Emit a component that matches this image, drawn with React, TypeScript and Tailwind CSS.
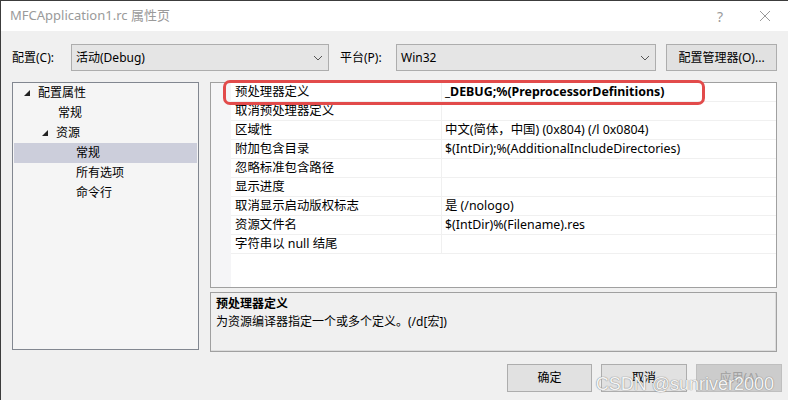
import React from "react";

const font = { fontFamily: '"Noto Sans", "Noto Sans CJK SC", sans-serif' };

const treeItems = [
  { label: "配置属性", indent: 10, arrow: true, selected: false },
  { label: "常规", indent: 44, arrow: false, selected: false },
  { label: "资源", indent: 28, arrow: true, selected: false },
  { label: "常规", indent: 62, arrow: false, selected: true },
  { label: "所有选项", indent: 62, arrow: false, selected: false },
  { label: "命令行", indent: 62, arrow: false, selected: false },
];

const rows: [string, string][] = [
  ["预处理器定义", "_DEBUG;%(PreprocessorDefinitions)"],
  ["取消预处理器定义", ""],
  ["区域性", "中文(简体，中国) (0x804) (/l 0x0804)"],
  ["附加包含目录", "$(IntDir);%(AdditionalIncludeDirectories)"],
  ["忽略标准包含路径", ""],
  ["显示进度", ""],
  ["取消显示启动版权标志", "是 (/nologo)"],
  ["资源文件名", "$(IntDir)%(Filename).res"],
  ["字符串以 null 结尾", ""],
];

function Chevron() {
  return (
    <svg width="10" height="6" viewBox="0 0 10 6" className="shrink-0">
      <path d="M1 1 L5 5 L9 1" fill="none" stroke="#555" strokeWidth="1" />
    </svg>
  );
}

export default function App() {
  return (
    <div
      className="w-[788px] h-[400px] bg-[#f0f0f0] border-l border-t border-[#3c3c3c] flex flex-col text-[12px] text-black overflow-hidden"
      style={font}
    >
      {/* title bar */}
      <div className="h-[30px] bg-white flex items-center shrink-0">
        <div className="pl-[9px] text-[13px] text-[#9a9a9a] flex-1">MFCApplication1.rc 属性页</div>
        <div className="w-[44px] text-center text-[14px] text-[#9a9a9a]">?</div>
        <div className="w-[46px] flex justify-center">
          <svg width="12" height="12" viewBox="0 0 12 12">
            <path d="M1 1 L11 11 M11 1 L1 11" stroke="#9a9a9a" strokeWidth="1" />
          </svg>
        </div>
      </div>

      {/* config row */}
      <div className="flex items-center h-[27px] mt-[13px] pl-[11px] shrink-0">
        <div className="w-[59px]">配置(C):</div>
        <div className="w-[258px] h-[27px] bg-[#e5e5e5] border border-[#adadad] flex items-center pl-[4px] pr-[5px]">
          <span className="flex-1">活动(Debug)</span>
          <Chevron />
        </div>
        <div className="w-[67px] pl-[11px]">平台(P):</div>
        <div className="w-[260px] h-[27px] bg-[#e5e5e5] border border-[#adadad] flex items-center pl-[4px] pr-[5px]">
          <span className="flex-1">Win32</span>
          <Chevron />
        </div>
        <div className="ml-[10px] w-[111px] h-[27px] bg-[#e1e1e1] border border-[#adadad] flex items-center justify-center">
          配置管理器(O)...
        </div>
      </div>

      {/* main panels */}
      <div className="flex mt-[11px] pl-[11px] shrink-0">
        {/* tree */}
        <div className="w-[187px] h-[268px] bg-[#f5f5f5] border border-[#828790] p-[1px] pt-[0px]">
          {treeItems.map((t, i) => (
            <div
              key={i}
              className={`h-[20px] flex items-center ${t.selected ? "bg-[#cccedb]" : ""}`}
              style={{ paddingLeft: t.indent }}
            >
              {t.arrow && (
                <svg width="6" height="6" viewBox="0 0 6 6" className="mr-[8px]">
                  <path d="M6 0 L6 6 L0 6 Z" fill="#222" />
                </svg>
              )}
              <span>{t.label}</span>
            </div>
          ))}
        </div>

        {/* right column */}
        <div className="ml-[11px] w-[567px] flex flex-col">
          <div className="relative h-[206px] bg-white border border-[#a0a0a0] flex text-[12.4px]">
            <div className="w-[20px] bg-[#f5f5f7] shrink-0" />
            <div className="flex-1 flex flex-col">
              {rows.map(([n, v], i) => (
                <div key={i} className="h-[19px] flex border-b border-[#f0f0f0]">
                  <div className="w-[211px] pl-[4px] flex items-center border-r border-[#f0f0f0] whitespace-nowrap">
                    {n}
                  </div>
                  <div
                    className={`flex-1 pl-[3px] flex items-center whitespace-nowrap ${i === 0 ? "font-bold" : ""}`}
                  >
                    {v}
                  </div>
                </div>
              ))}
            </div>
            <div className="absolute left-[12px] top-[-3px] w-[482px] h-[25px] border-[3px] border-[#e24b4b] rounded-[7px] pointer-events-none" />
          </div>

          <div className="mt-[4px] h-[60px] bg-[#f0f0f0] border border-[#a0a0a0] shadow-[inset_-1px_-1px_0_#dcdcdc] px-[5px] pt-[2px]">
            <div className="font-bold leading-[18px]">预处理器定义</div>
            <div className="leading-[18px]">为资源编译器指定一个或多个定义。(/d[宏])</div>
          </div>
        </div>
      </div>

      {/* buttons */}
      <div className="relative flex justify-end mt-[12px] pr-[6px] gap-[9px] shrink-0">
        <div className="w-[85px] h-[28px] bg-[#e1e1e1] border border-[#adadad] flex items-center justify-center">确定</div>
        <div className="w-[86px] h-[28px] bg-[#e1e1e1] border border-[#adadad] flex items-center justify-center">取消</div>
        <div className="w-[86px] h-[28px] bg-[#cccccc] border border-[#bfbfbf] flex items-center justify-center text-[#a0a0a0]">
          应用(A)
        </div>
        <div
          className="absolute right-[14px] top-[9px] text-[18px] leading-[22px] text-[#f4f4f4] [text-shadow:0_0_1px_#888,0_0_1px_#888] pointer-events-none"
          style={{ fontFamily: '"Liberation Sans", sans-serif' }}
        >
          CSDN @sunriver2000
        </div>
      </div>
    </div>
  );
}
